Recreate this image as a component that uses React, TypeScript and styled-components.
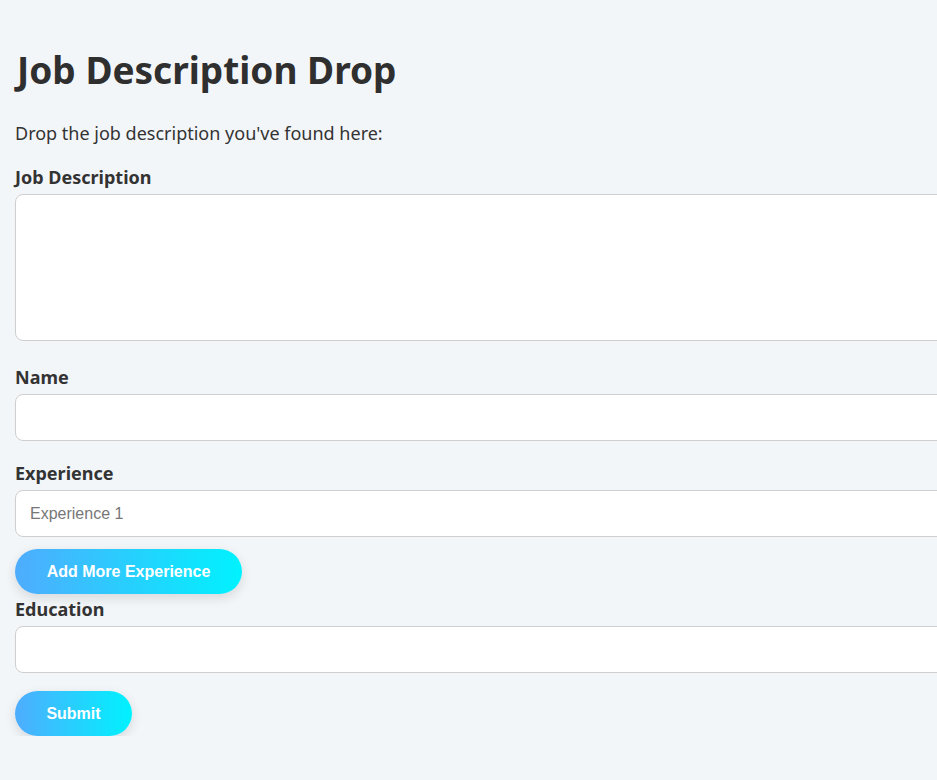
import React from "react";
import styled, { createGlobalStyle } from "styled-components";

const Global = createGlobalStyle`
  html, body { margin: 0; padding: 0; background: #f3f6f9; overflow: hidden; }
  body { font-family: "Segoe UI", "Noto Sans", sans-serif; color: #333333; }
`;

const Page = styled.div`
  padding: 0 0 0 15px;
  width: 1000px;
`;

const Title = styled.h1`
  margin: 0 0 0 2px;
  padding-top: 46px;
  font-size: 37px;
  line-height: 48px;
  font-weight: 700;
  color: #2f2f2f;
`;

const Intro = styled.p`
  margin: 27px 0 20px;
  font-size: 18px;
  line-height: 24px;
  color: #333333;
`;

const Field = styled.div<{ $gap: number }>`
  display: flex;
  flex-direction: column;
  margin-bottom: ${(p) => p.$gap}px;
`;

const Label = styled.label`
  font-size: 18px;
  line-height: 24px;
  font-weight: 700;
  margin-bottom: 5px;
`;

const inputBase = `
  box-sizing: border-box;
  width: 960px;
  border: 1px solid #cfcfcf;
  border-radius: 8px;
  background: #ffffff;
  font-family: "Liberation Sans", Arial, sans-serif;
  font-size: 16px;
  padding: 0 14px;
  color: #333;
  outline: none;
  &::placeholder { color: #777777; }
`;

const TextArea = styled.textarea`
  ${inputBase}
  height: 147px;
  resize: none;
  display: block;
`;

const Input = styled.input`
  ${inputBase}
  height: 47px;
`;

const PillButton = styled.button<{ $w: number }>`
  width: ${(p) => p.$w}px;
  height: 45px;
  border: none;
  border-radius: 23px;
  background: linear-gradient(90deg, #4facfe 0%, #00f2fe 100%);
  color: #ffffff;
  font-family: "Liberation Sans", Arial, sans-serif;
  font-weight: 700;
  font-size: 16px;
  box-shadow: 0 4px 12px rgba(0, 0, 0, 0.12);
  cursor: pointer;
  padding: 0;
`;

const ExpButtonRow = styled.div`
  margin-top: 12px;
`;

export default function App() {
  return (
    <>
      <Global />
      <Page>
        <Title>Job Description Drop</Title>
        <Intro>Drop the job description you've found here:</Intro>
        <Field $gap={24}>
          <Label>Job Description</Label>
          <TextArea />
        </Field>
        <Field $gap={20}>
          <Label>Name</Label>
          <Input />
        </Field>
        <Field $gap={3}>
          <Label>Experience</Label>
          <Input placeholder="Experience 1" />
          <ExpButtonRow>
            <PillButton $w={227}>Add More Experience</PillButton>
          </ExpButtonRow>
        </Field>
        <Field $gap={18}>
          <Label>Education</Label>
          <Input />
        </Field>
        <PillButton $w={117}>Submit</PillButton>
      </Page>
    </>
  );
}
